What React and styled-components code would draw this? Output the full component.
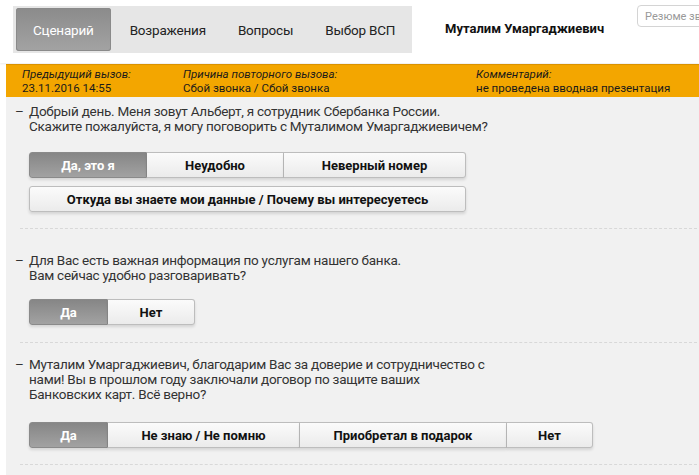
import React from 'react';
import styled, { createGlobalStyle } from 'styled-components';

const GlobalStyle = createGlobalStyle`
  body {
    margin: 0;
    background: #ffffff;
    font-family: Roboto, "Liberation Sans", sans-serif;
    color: #333;
    overflow-x: hidden;
  }
`;

const tabs = ['Сценарий', 'Возражения', 'Вопросы', 'Выбор ВСП'];

const questions = [
  {
    text: ['Добрый день. Меня зовут Альберт, я сотрудник Сбербанка России.', 'Скажите пожалуйста, я могу поговорить с Муталимом Умаргаджиевичем?'],
    rows: [
      [
        { label: 'Да, это я', w: 118, active: true },
        { label: 'Неудобно', w: 137 },
        { label: 'Неверный номер', w: 182 },
      ],
      [{ label: 'Откуда вы знаете мои данные / Почему вы интересуетесь', w: 437 }],
    ],
    pt: 7,
    gap: 18,
    pb: 16,
  },
  {
    text: ['Для Вас есть важная информация по услугам нашего банка.', 'Вам сейчас удобно разговаривать?'],
    rows: [
      [
        { label: 'Да', w: 79, active: true },
        { label: 'Нет', w: 87 },
      ],
    ],
    pt: 24,
    gap: 16,
    pb: 17,
  },
  {
    text: [
      'Муталим Умаргаджиевич, благодарим Вас за доверие и сотрудничество с',
      'нами! Вы в прошлом году заключали договор по защите ваших',
      'Банковских карт. Всё верно?',
    ],
    rows: [
      [
        { label: 'Да', w: 79, active: true },
        { label: 'Не знаю / Не помню', w: 192 },
        { label: 'Приобретал в подарок', w: 207 },
        { label: 'Нет', w: 86 },
      ],
    ],
    pt: 14,
    gap: 20,
    pb: 16,
  },
];

const App = () => {
  return (
    <>
      <GlobalStyle />
      <Header>
        <TabBar>
          {tabs.map((t, i) => (
            <Tab key={t} active={i === 0}>{t}</Tab>
          ))}
        </TabBar>
        <ClientName>Муталим Умаргаджиевич</ClientName>
        <Search placeholder="Резюме звонка" />
      </Header>
      <Panel>
        <InfoBar>
          <InfoCol>
            <InfoLabel>Предыдущий вызов:</InfoLabel>
            <InfoValue>23.11.2016 14:55</InfoValue>
          </InfoCol>
          <InfoCol>
            <InfoLabel>Причина повторного вызова:</InfoLabel>
            <InfoValue>Сбой звонка / Сбой звонка</InfoValue>
          </InfoCol>
          <InfoCol>
            <InfoLabel>Комментарий:</InfoLabel>
            <InfoValue>не проведена вводная презентация</InfoValue>
          </InfoCol>
        </InfoBar>
        {questions.map((q, qi) => (
          <Section key={qi} pt={q.pt} pb={q.pb}>
            <Question>
              <Dash>–</Dash>
              <div>
                {q.text.map((line) => (
                  <Line key={line}>{line}</Line>
                ))}
              </div>
            </Question>
            <Answers top={q.gap}>
              {q.rows.map((row, ri) => (
                <ButtonGroup key={ri}>
                  {row.map((b) => (
                    <AnswerButton key={b.label} active={b.active} style={{ width: b.w }}>
                      {b.label}
                    </AnswerButton>
                  ))}
                </ButtonGroup>
              ))}
            </Answers>
          </Section>
        ))}
      </Panel>
    </>
  );
};

export default App;

const Header = styled.div`
  display: flex;
  align-items: flex-start;
  height: 63px;
  overflow: hidden;
  box-shadow: 0 1px 2px rgba(0, 0, 0, 0.08);
  position: relative;
  z-index: 1;
`;

const TabBar = styled.div`
  display: flex;
  align-items: stretch;
  flex: none;
  margin: 6px 0 0 13px;
  padding: 2px 3px;
  width: 393px;
  height: 43px;
  background: #e6e6e6;
`;

const Tab = styled.div`
  display: flex;
  align-items: center;
  white-space: nowrap;
  padding: 0 ${(p) => (p.active ? 17 : 16)}px;
  margin-right: ${(p) => (p.active ? 3 : 0)}px;
  font-size: 13.5px;
  letter-spacing: -0.2px;
  color: ${(p) => (p.active ? '#fff' : '#222')};
  border-radius: 3px;
  background: ${(p) => (p.active ? 'linear-gradient(#8b8b8b, #a3a3a3)' : 'transparent')};
  box-shadow: ${(p) => (p.active ? 'inset 0 0 0 1px #8a8a8a' : 'none')};
`;

const ClientName = styled.div`
  flex: none;
  margin: 21px 0 0 33px;
  font-size: 13px;
  font-weight: 700;
  color: #111;
  white-space: nowrap;
`;

const Search = styled.input`
  flex: none;
  margin: 5px 0 0 33px;
  width: 100px;
  height: 22px;
  box-sizing: border-box;
  border: 1px solid #d4d4d4;
  border-radius: 4px;
  padding: 0 7px;
  font-family: Roboto, "Liberation Sans", sans-serif;
  font-size: 11px;
  &::placeholder {
    color: #999;
  }
`;

const Panel = styled.div`
  margin: 1px 0 0 6px;
  background: #f1f1f1;
  padding-bottom: 20px;
`;

const InfoBar = styled.div`
  display: grid;
  grid-template-columns: 161px 293px 1fr;
  padding: 2px 0 2px 16px;
  background: #f3a600;
  border-top: 1px solid #e09600;
  font-size: 11.5px;
  line-height: 14px;
  color: #1a1a1a;
`;

const InfoCol = styled.div`
  white-space: nowrap;
`;

const InfoLabel = styled.div`
  font-style: italic;
`;

const InfoValue = styled.div``;

const Section = styled.div`
  margin: 0 2px 0 14px;
  padding: ${(p) => p.pt}px 0 ${(p) => p.pb}px;
  border-bottom: 1px dashed #d8d8d8;
`;

const Question = styled.div`
  display: flex;
  font-size: 13.5px;
  letter-spacing: -0.25px;
  color: #333;
`;

const Line = styled.div`
  line-height: 15px;
  white-space: nowrap;
`;

const Dash = styled.span`
  width: 14px;
  flex: none;
  margin-left: -5px;
  line-height: 15px;
`;

const Answers = styled.div`
  display: flex;
  flex-direction: column;
  gap: 8px;
  margin: ${(p) => p.top}px 0 0 9px;
`;

const ButtonGroup = styled.div`
  display: flex;
`;

const AnswerButton = styled.div`
  box-sizing: border-box;
  height: 26px;
  display: flex;
  align-items: center;
  justify-content: center;
  font-size: 13px;
  font-weight: 700;
  white-space: nowrap;
  color: ${(p) => (p.active ? '#fff' : '#111')};
  background: ${(p) => (p.active ? 'linear-gradient(#868686, #a2a2a2)' : 'linear-gradient(#fbfbfb, #ebebeb)')};
  border: 1px solid ${(p) => (p.active ? '#8a8a8a' : '#bdbdbd')};
  border-left-width: 0;
  box-shadow: 0 2px 3px rgba(0, 0, 0, 0.12);
  &:first-child {
    border-left-width: 1px;
    border-radius: 3px 0 0 3px;
  }
  &:last-child {
    border-radius: 0 3px 3px 0;
  }
  &:only-child {
    border-radius: 3px;
  }
`;
